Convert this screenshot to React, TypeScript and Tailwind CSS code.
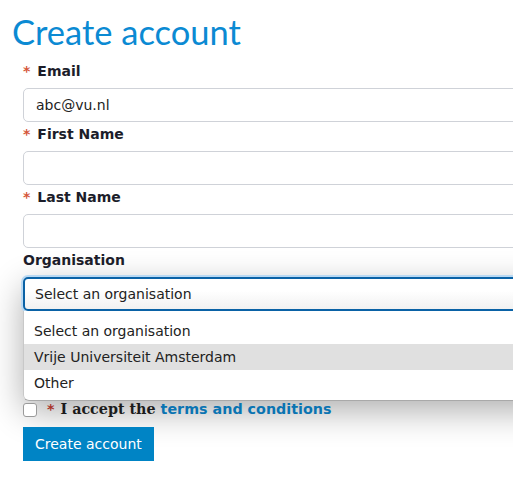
import type { ReactNode } from 'react'

const sans = 'font-["DejaVu_Sans",Verdana,sans-serif]'

function Req() {
  return <span className="mr-[7px] text-[#d5573a]">*</span>
}

function FieldLabel({ children, required = false }: { children: ReactNode; required?: boolean }) {
  return (
    <label className="mb-[5px] flex h-[24px] items-center text-[14px] font-bold text-[#1c1d2a]">
      {required ? <Req /> : null}
      {children}
    </label>
  )
}

function TextInput({ value = '' }: { value?: string }) {
  return (
    <div className="flex h-[34px] w-[620px] items-center rounded-[5px] border border-[#cfd2d8] bg-white px-3 text-[14px] text-[#222]">
      {value}
    </div>
  )
}

const options = ['Select an organisation', 'Vrije Universiteit Amsterdam', 'Other']

export default function App() {
  return (
    <div className={`h-[481px] w-[513px] overflow-hidden bg-white ${sans}`}>
      <div className="pl-[12px] pt-[9px]">
        <h1 className='h-[50px] font-["Lato",sans-serif] text-[34.5px] leading-[46px] text-[#0b8ad3]'>
          Create account
        </h1>
      </div>

      <form className="pl-[23px]">
        <FieldLabel required>Email</FieldLabel>
        <TextInput value="abc@vu.nl" />

        <FieldLabel required>First Name</FieldLabel>
        <TextInput />

        <FieldLabel required>Last Name</FieldLabel>
        <TextInput />

        <FieldLabel>Organisation</FieldLabel>
        <div className="w-[620px] rounded-[6px] shadow-[0_10px_34px_rgba(0,0,0,0.32)]">
          <div className="flex h-[34px] items-center rounded-[5px] border-2 border-[#0a62a6] bg-[linear-gradient(180deg,#ffffff_40%,#f1f1f1)] px-[10px] pt-[1px] text-[14px] text-[#222] ring-2 ring-[#b9d9f3]">
            Select an organisation
          </div>
          <ul className="rounded-b-[6px] border border-t-0 border-[#c8c8c8] border-b-[#a9a9a9] bg-white pb-[4px] pt-[7px] text-[14px] text-[#222]">
            {options.map((o, i) => (
              <li
                key={o}
                className={`flex h-[26px] items-center px-[10px] ${i === 1 ? 'bg-[#e0e0e0]' : ''}`}
              >
                {o}
              </li>
            ))}
          </ul>
        </div>

        <div className="flex h-[18px] items-center text-[14.3px] font-bold">
          <span className="mr-[10px] h-[14px] w-[14px] rounded-[3px] border border-[#9a9a9a] bg-white" />
          <span className="mr-[6px] text-[#a8322a]">*</span>
          <span className='font-["DejaVu_Serif",serif] text-[#1c1c1c]'>I accept the</span>
          <a className="ml-[5px] text-[#0a74b2]">terms and conditions</a>
        </div>

        <button
          type="button"
          className="mt-[8px] h-[34px] bg-[#0084c5] px-3 text-[14px] text-white"
        >
          Create account
        </button>
      </form>
    </div>
  )
}
